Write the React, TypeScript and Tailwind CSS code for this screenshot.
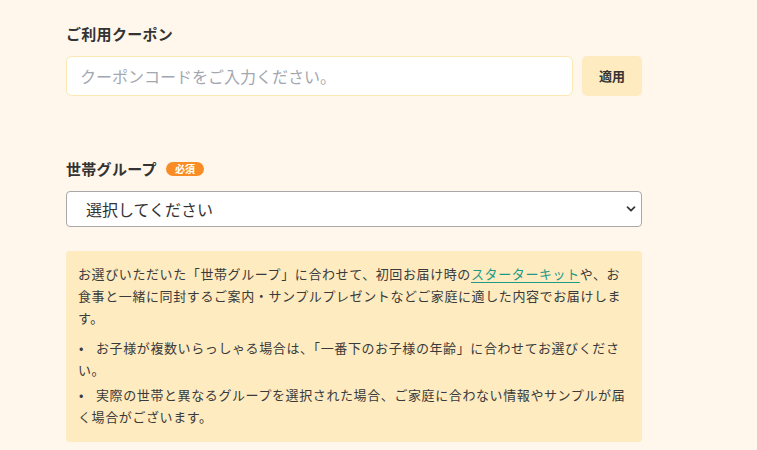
export default function App() {
	return (
		<div
			lang="ja"
			className="min-h-[450px] w-full bg-[#fff7eb] pt-[23px] text-[#333333]"
			style={{ fontFamily: '"Noto Sans CJK JP", "Noto Sans", sans-serif' }}
		>
			<div className="ml-[66px] w-[576px]">
				<h3 className="text-[15px] font-bold leading-[22px] tracking-[0.3px]">
					ご利用クーポン
				</h3>
				<div className="mt-[11px] flex gap-[9px]">
					<input
						type="text"
						placeholder="クーポンコードをご入力ください。"
						className="h-[40px] flex-1 rounded-[6px] border border-[#fde8b4] bg-white px-[13px] text-[16px] text-[#333333] outline-none placeholder:text-[#a3a7b0]"
					/>
					<button
						type="button"
						className="h-[40px] w-[60px] rounded-[5px] bg-[#feebc0] text-[13px] font-bold text-[#333333]"
					>
						適用
					</button>
				</div>

				<div className="mt-[62px] flex h-[22px] items-center gap-[9px]">
					<h3 className="text-[15px] font-bold leading-[22px] tracking-[0.3px]">
						世帯グループ
					</h3>
					<span className="flex h-[14px] w-[38px] items-center justify-center rounded-full bg-[#f98d25] text-[10px] font-bold leading-none text-white">
						必須
					</span>
				</div>
				<div className="relative mt-[11px]">
					<select className="h-[36px] w-full appearance-none rounded-[4px] border border-[#a8a8a8] bg-white pl-[19px] text-[16px] text-[#333333] outline-none">
						<option>選択してください</option>
					</select>
					<svg
						className="pointer-events-none absolute right-[6px] top-[13px]"
						width="10"
						height="10"
						viewBox="0 0 10 10"
						fill="none"
						stroke="#3a3a3a"
						strokeWidth="1.8"
						strokeLinecap="round"
						strokeLinejoin="round"
					>
						<path d="M1.5 3.2 L5 6.7 L8.5 3.2" />
					</svg>
				</div>

				<div className="mt-[24px] rounded-[4px] bg-[#feebc0] px-[12px] pb-[14px] pt-[12px] text-[13px] leading-[22px] tracking-[0.6px] text-[#3a3a3a]">
					<p className="mb-[8px]">
						お選びいただいた「世帯グループ」に合わせて、初回お届け時の
						<a href="#" className="text-[#1f9a88] underline underline-offset-[3px]">
							スターターキット
						</a>
						や、お食事と一緒に同封するご案内・サンプルプレゼントなどご家庭に適した内容でお届けします。
					</p>
					<ul>
						<li className="mb-[3px]">
							<span className="inline-block w-[18px] pl-[1px]">•</span>
							お子様が複数いらっしゃる場合は、「一番下のお子様の年齢」に合わせてお選びください。
						</li>
						<li>
							<span className="inline-block w-[18px] pl-[1px]">•</span>
							実際の世帯と異なるグループを選択された場合、ご家庭に合わない情報やサンプルが届く場合がございます。
						</li>
					</ul>
				</div>
			</div>
		</div>
	);
}
